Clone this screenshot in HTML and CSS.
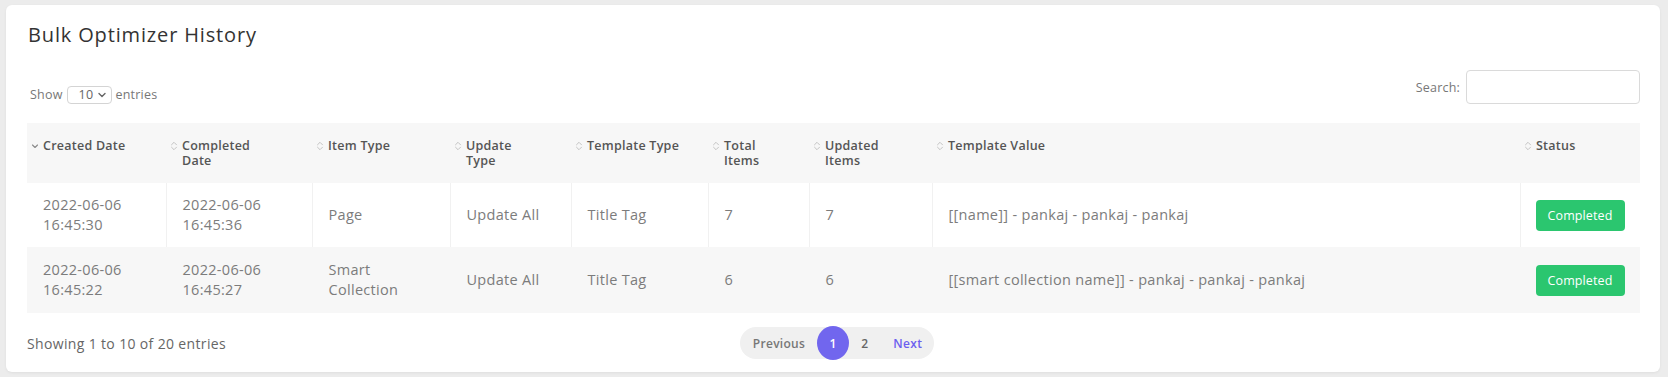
FILE: index.html
```html
<!DOCTYPE html>
<html lang="en">
<head>
<meta charset="utf-8">
<title>Bulk Optimizer History</title>
<link rel="stylesheet" href="styles.css">
</head>
<body>
<div class="card">
  <h1 class="title">Bulk Optimizer History</h1>

  <div class="controls">
    <div class="length">
      <span>Show</span>
      <span class="select">10
        <svg class="chev" width="8" height="6" viewBox="0 0 8 6"><path d="M1 1.5 L4 4.5 L7 1.5" fill="none" stroke="#666" stroke-width="1.4" stroke-linecap="round" stroke-linejoin="round"/></svg>
      </span>
      <span>entries</span>
    </div>
    <label class="search">Search: <input type="text" class="search-input"></label>
  </div>

  <table class="grid">
    <colgroup>
      <col class="w139"><col class="w146"><col class="w138"><col class="w121"><col class="w137"><col class="w101"><col class="w123"><col class="w588"><col class="w120">
    </colgroup>
    <thead>
      <tr>
        <th><div class="th-in"><svg class="sort" width="8" height="10" viewBox="0 0 8 10"><path d="M1.5 4 L4 6.5 L6.5 4" fill="none" stroke="#8a8a8a" stroke-width="1.1" stroke-linecap="round" stroke-linejoin="round"/></svg><span>Created Date</span></div></th>
        <th><div class="th-in"><svg class="sort" width="8" height="10" viewBox="0 0 8 10"><path d="M1.5 3.8 L4 1.3 L6.5 3.8 M1.5 6.2 L4 8.7 L6.5 6.2" fill="none" stroke="#c4c4c4" stroke-width="1" stroke-linecap="round" stroke-linejoin="round"/></svg><span>Completed<br>Date</span></div></th>
        <th><div class="th-in"><svg class="sort" width="8" height="10" viewBox="0 0 8 10"><path d="M1.5 3.8 L4 1.3 L6.5 3.8 M1.5 6.2 L4 8.7 L6.5 6.2" fill="none" stroke="#c4c4c4" stroke-width="1" stroke-linecap="round" stroke-linejoin="round"/></svg><span>Item Type</span></div></th>
        <th><div class="th-in"><svg class="sort" width="8" height="10" viewBox="0 0 8 10"><path d="M1.5 3.8 L4 1.3 L6.5 3.8 M1.5 6.2 L4 8.7 L6.5 6.2" fill="none" stroke="#c4c4c4" stroke-width="1" stroke-linecap="round" stroke-linejoin="round"/></svg><span>Update<br>Type</span></div></th>
        <th><div class="th-in"><svg class="sort" width="8" height="10" viewBox="0 0 8 10"><path d="M1.5 3.8 L4 1.3 L6.5 3.8 M1.5 6.2 L4 8.7 L6.5 6.2" fill="none" stroke="#c4c4c4" stroke-width="1" stroke-linecap="round" stroke-linejoin="round"/></svg><span>Template Type</span></div></th>
        <th><div class="th-in"><svg class="sort" width="8" height="10" viewBox="0 0 8 10"><path d="M1.5 3.8 L4 1.3 L6.5 3.8 M1.5 6.2 L4 8.7 L6.5 6.2" fill="none" stroke="#c4c4c4" stroke-width="1" stroke-linecap="round" stroke-linejoin="round"/></svg><span>Total<br>Items</span></div></th>
        <th><div class="th-in"><svg class="sort" width="8" height="10" viewBox="0 0 8 10"><path d="M1.5 3.8 L4 1.3 L6.5 3.8 M1.5 6.2 L4 8.7 L6.5 6.2" fill="none" stroke="#c4c4c4" stroke-width="1" stroke-linecap="round" stroke-linejoin="round"/></svg><span>Updated<br>Items</span></div></th>
        <th><div class="th-in"><svg class="sort" width="8" height="10" viewBox="0 0 8 10"><path d="M1.5 3.8 L4 1.3 L6.5 3.8 M1.5 6.2 L4 8.7 L6.5 6.2" fill="none" stroke="#c4c4c4" stroke-width="1" stroke-linecap="round" stroke-linejoin="round"/></svg><span>Template Value</span></div></th>
        <th><div class="th-in"><svg class="sort" width="8" height="10" viewBox="0 0 8 10"><path d="M1.5 3.8 L4 1.3 L6.5 3.8 M1.5 6.2 L4 8.7 L6.5 6.2" fill="none" stroke="#c4c4c4" stroke-width="1" stroke-linecap="round" stroke-linejoin="round"/></svg><span>Status</span></div></th>
      </tr>
    </thead>
    <tbody>
      <tr>
        <td>2022-06-06<br>16:45:30</td>
        <td>2022-06-06<br>16:45:36</td>
        <td>Page</td>
        <td>Update All</td>
        <td>Title Tag</td>
        <td>7</td>
        <td>7</td>
        <td>[[name]] - pankaj - pankaj - pankaj</td>
        <td><span class="badge">Completed</span></td>
      </tr>
      <tr class="alt">
        <td>2022-06-06<br>16:45:22</td>
        <td>2022-06-06<br>16:45:27</td>
        <td>Smart<br>Collection</td>
        <td>Update All</td>
        <td>Title Tag</td>
        <td>6</td>
        <td>6</td>
        <td>[[smart collection name]] - pankaj - pankaj - pankaj</td>
        <td><span class="badge">Completed</span></td>
      </tr>
    </tbody>
  </table>

  <div class="footer">
    <div class="info">Showing 1 to 10 of 20 entries</div>
    <div class="pager">
      <span class="pg prev">Previous</span>
      <span class="pg current">1</span>
      <span class="pg num">2</span>
      <span class="pg next">Next</span>
    </div>
    <div class="spacer"></div>
  </div>
</div>
</body>
</html>
```

FILE: styles.css
```css
* { box-sizing: border-box; }

html, body {
  margin: 0;
  height: 100%;
}

body {
  background: #ececec;
  padding: 5px 8px 5px 6px;
  font-family: "Open Sans", "Liberation Sans", sans-serif;
  color: #777;
}

.card {
  background: #fff;
  border-radius: 6px;
  box-shadow: 0 1px 3px rgba(0, 0, 0, 0.06);
  padding: 18px 20px 12px 21px;
}

.title {
  margin: 0;
  font-size: 20px;
  line-height: 24px;
  font-weight: 500;
  color: #333;
  letter-spacing: 0.85px;
  padding-left: 1px;
}

.controls {
  margin-top: 23px;
  display: flex;
  justify-content: space-between;
  align-items: flex-end;
  height: 34px;
}

.length {
  display: flex;
  align-items: center;
  gap: 4px;
  font-size: 12.5px;
  letter-spacing: 0.2px;
  color: #777;
  padding-left: 3px;
  height: 18px;
  line-height: 16px;
}

.select {
  display: inline-flex;
  align-items: center;
  justify-content: space-between;
  width: 45px;
  height: 18px;
  border: 1px solid #d4d4d4;
  border-radius: 4px;
  padding: 0 5px 0 11px;
  font-size: 12.5px;
  color: #666;
}

.chev { display: block; }

.search {
  display: flex;
  align-items: center;
  gap: 6px;
  font-size: 12.5px;
  letter-spacing: 0.2px;
  color: #777;
}

.search-input {
  width: 174px;
  height: 34px;
  border: 1px solid #dadada;
  border-radius: 4px;
  outline: none;
  background: #fff;
  margin: 0;
}

.grid {
  margin-top: 19px;
  width: 100%;
  table-layout: fixed;
  border-collapse: collapse;
}

.w139 { width: 139px; }
.w146 { width: 146px; }
.w138 { width: 138px; }
.w121 { width: 121px; }
.w137 { width: 137px; }
.w101 { width: 101px; }
.w123 { width: 123px; }
.w588 { width: 588px; }
.w120 { width: 120px; }

thead tr { background: #f7f7f7; }

th {
  height: 60px;
  padding: 15px 10px 15px 4px;
  vertical-align: top;
  text-align: left;
  font-size: 12.5px;
  line-height: 15px;
  font-weight: 600;
  color: #555;
  letter-spacing: 0.25px;
  white-space: nowrap;
}

.th-in {
  display: flex;
  align-items: flex-start;
  gap: 4px;
}

.sort {
  display: block;
  flex: none;
  margin-top: 3px;
}

td {
  padding: 12px 15px 12px 16px;
  vertical-align: middle;
  font-size: 14.5px;
  line-height: 20px;
  color: #7c7c7c;
  letter-spacing: 0.3px;
  border-right: 1px solid #f1f1f1;
  white-space: nowrap;
}

td:last-child { border-right: none; padding-left: 15px; }

tbody tr { height: 64px; background: #fff; }
tbody tr.alt { height: 66px; background: #f7f7f7; }
tbody tr.alt td { border-right-color: #f7f7f7; }

.badge {
  display: inline-block;
  height: 31px;
  line-height: 31px;
  width: 89px;
  text-align: center;
  border-radius: 4px;
  background: #2bc66f;
  color: #fff;
  font-size: 12.5px;
  letter-spacing: 0.1px;
}

.footer {
  margin-top: 13px;
  display: grid;
  grid-template-columns: 1fr auto 1fr;
  align-items: center;
  height: 34px;
}

.info {
  font-size: 14px;
  color: #666;
  letter-spacing: 0.35px;
}

.pager {
  display: flex;
  align-items: center;
  height: 32px;
  background: #f0f0f0;
  border-radius: 16px;
  margin-left: 7px;
}

.pg {
  font-size: 12px;
  font-weight: 600;
  color: #777;
  letter-spacing: 0.3px;
}

.prev { padding: 0 12px 0 13px; }

.current {
  width: 32px;
  height: 34px;
  border-radius: 50%;
  background: #7166ee;
  color: #fff;
  display: flex;
  align-items: center;
  justify-content: center;
}

.num { padding: 0 12px; color: #666; }

.next { padding: 0 12px 0 13px; color: #6c5fef; }
```
